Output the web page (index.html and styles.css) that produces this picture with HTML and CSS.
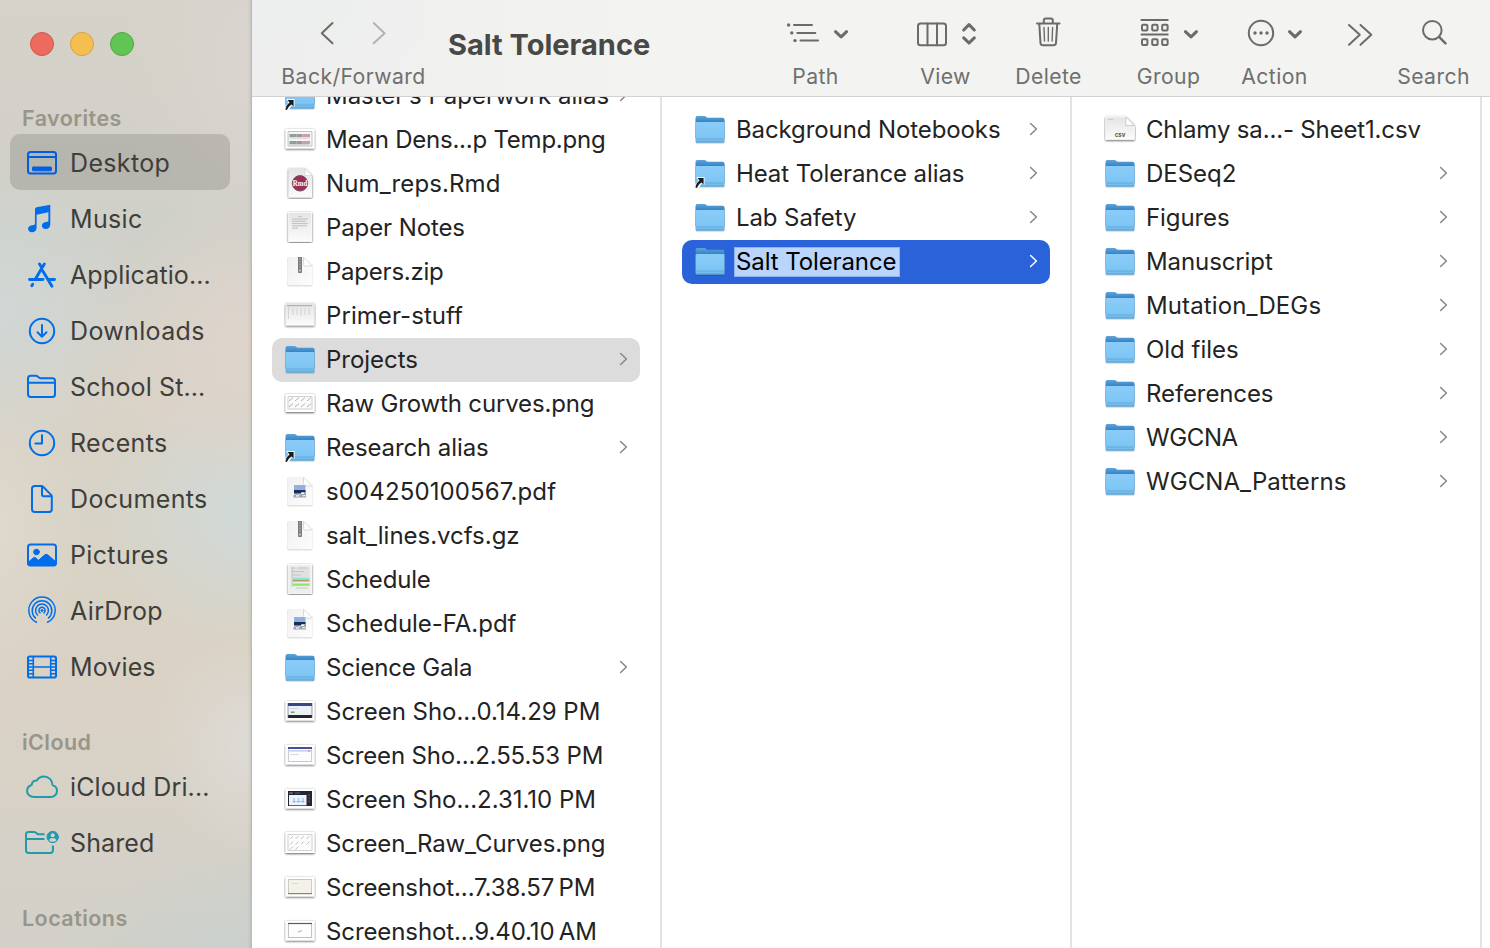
FILE: index.html
```html
<!DOCTYPE html>
<html lang="en">
<head>
<meta charset="utf-8">
<title>Salt Tolerance</title>
<link rel="stylesheet" href="styles.css">
</head>
<body>
<svg class="defs" width="0" height="0" aria-hidden="true">
  <defs>
    <linearGradient id="g-front" x1="0" y1="0" x2="0" y2="1"><stop offset="0" stop-color="#8accf8"/><stop offset=".7" stop-color="#7fc6f4"/><stop offset="1" stop-color="#6db7e8"/></linearGradient>
    <linearGradient id="g-back" x1="0" y1="2" x2="0" y2="10" gradientUnits="userSpaceOnUse"><stop offset="0" stop-color="#5ba5da"/><stop offset="1" stop-color="#2f76be"/></linearGradient>
    <linearGradient id="g-paper" x1="0" y1="0" x2="1" y2="1"><stop offset="0" stop-color="#f0f0f0"/><stop offset="1" stop-color="#fdfdfd"/></linearGradient>
    <linearGradient id="g-grey" x1="0" y1="0" x2="0" y2="1"><stop offset="0" stop-color="#e4e4e4"/><stop offset="1" stop-color="#fbfbfb"/></linearGradient>
    <filter id="shade" x="-20%" y="-20%" width="140%" height="150%"><feDropShadow dx="0" dy=".8" stdDeviation="1" flood-color="#000" flood-opacity=".7"/></filter>
    <filter id="soft" x="-20%" y="-20%" width="140%" height="150%"><feDropShadow dx="0" dy=".6" stdDeviation=".6" flood-color="#000" flood-opacity=".4"/></filter>
  </defs>
  <symbol id="folder" viewBox="0 0 32 32">
    <g filter="url(#soft)">
      <path d="M1.600 4q0-1.900 1.800-1.900h6.800q1 0 1.800.7l1.400 1h15.200q1.900 0 1.900 1.900V24H1.600z" fill="url(#g-back)"/>
      <path d="M1.600 9.300q0-1.200 1.200-1.200h26.500q1.200 0 1.200 1.200v18q0 1.200-1.200 1.200H2.800q-1.200 0-1.200-1.200z" fill="url(#g-front)"/>
    </g>
    <path d="M2 25h28.200" stroke="#5da9da" stroke-width=".8"/>
    <path d="M2 28h28.200" stroke="#569ccb" stroke-width=".8"/>
  </symbol>
  <symbol id="alias" viewBox="0 0 32 32">
    <use href="#folder"/>
    <path d="M2.500 18.900h8v8l-2.300-1.800-4 5.700-3.700.2.300-3.500 3.800-5z" fill="#fff"/>
    <path d="M3.600 20h6v6.300l-2-1.900c-2.200 1.300-3.600 3-4.600 5.600l-1.600-.6c.4-2.900 1.900-5.200 4.200-7z" fill="#1a1a1a"/>
  </symbol>
  <symbol id="doc" viewBox="0 0 32 32">
    <g filter="url(#soft)"><path d="M3.300 3q0-1 1-1h15.200L28.500 11v18q0 1.300-1.300 1.300H4.600q-1.300 0-1.300-1.300z" fill="url(#g-paper)"/></g>
    <path d="M19.500 2v7.500q0 1.500 1.500 1.500h7.500z" fill="#fdfdfd" stroke="#cfcfcf" stroke-width=".7"/>
  </symbol>
  <symbol id="note" viewBox="0 0 32 32">
    <g filter="url(#shade)"><path d="M4.700 1.500h22.800v29H4.700z" fill="url(#g-grey)" stroke="#fff" stroke-width=".8"/></g>
    <path d="M14.500 5.500h3M8 8h16M8 10.300h14M8 12.600h16M8 14.900h15M8 17.200h6" stroke="#b2b2b2" stroke-width=".8"/>
  </symbol>
  <symbol id="zip" viewBox="0 0 32 32">
    <use href="#doc"/>
    <path d="M14 2h4v15q0 1-1 1h-2q-1 0-1-1z" fill="#77797c"/>
    <path d="M16 3v11" stroke="#b4b7ba" stroke-width="1.400" stroke-dasharray="1.500 1.200"/>
    <path d="M15.200 14.500h1.600v2h-1.600z" fill="#d4d6d8"/>
  </symbol>
  <symbol id="pdf" viewBox="0 0 32 32">
    <use href="#doc"/>
    <path d="M10 10h11.500v8.500H10z" fill="#92b0e4"/>
    <path d="M10 15h11.500v3.500H10z" fill="#1d2c52"/>
    <path d="M9.500 20l4-1.500 2 1.500 3-3h3.500V22.500H9.500z" fill="#9aa6b6"/>
    <path d="M17 17.500h3v1.500h-3zM12 20.200h3v1.200h-3zM18.500 20.200h3v1h-3z" fill="#fff"/>
  </symbol>
  <symbol id="sched" viewBox="0 0 32 32">
    <g filter="url(#shade)"><path d="M4.700 1.500h22.800v29H4.700z" fill="#eceeed" stroke="#fff" stroke-width=".8"/></g>
    <path d="M7.500 4h18v11h-18z" fill="#e0e2e1"/>
    <path d="M8 5h3M14 5h9M8 8.500h12M8 12h9M8 4v20M12 25h12" stroke="#bcbfbd" stroke-width=".8"/>
    <path d="M8.500 14.700h17v2h-17z" fill="#94e3d6"/><path d="M8.500 16.700h17v1.800h-17z" fill="#b39b72"/>
    <path d="M8.500 20.500h17v2.300h-17z" fill="#8cea5a"/>
  </symbol>
  <symbol id="frame" viewBox="0 0 32 32">
    <g filter="url(#shade)"><path d="M1.500 6h29v19.500h-29z" fill="#fff"/></g>
  </symbol>
  <symbol id="density" viewBox="0 0 32 32">
    <use href="#frame"/>
    <path d="M4 8.500h24v14.500H4z" fill="#f4f4f4" stroke="#bdbdbd" stroke-width=".9"/>
    <path d="M5.500 11h7v3h-7zM5.500 18h7v3h-7z" fill="#8d9f99"/><path d="M12.500 11h6v3h-6zM12.500 18h6v3h-6z" fill="#a393a0"/><path d="M18.500 11h7.500v3h-7.500zM18.500 18h7.500v3h-7.500z" fill="#c4a2a6"/>
    <path d="M5.500 15h20M5.500 21.800h20" stroke="#b5b5b5" stroke-width=".7"/>
  </symbol>
  <symbol id="sheet" viewBox="0 0 32 32">
    <g filter="url(#shade)"><path d="M1.500 4.500h29v22h-29z" fill="url(#g-grey)"/></g>
    <path d="M3 6.700h25" stroke="#a4a4a4" stroke-width="1"/>
    <path d="M4.500 8v12M9 9v7M13 9v7M17 9v8M21 9v7M25 9v7" stroke="#cacaca" stroke-width=".8"/>
  </symbol>
  <symbol id="curves" viewBox="0 0 32 32">
    <g filter="url(#shade)"><path d="M1.500 7h29v18h-29z" fill="#fff"/></g>
    <path d="M4 9.500h24v12.500H4z" fill="#fbfbfb" stroke="#c4c4c4" stroke-width=".8"/>
    <path d="M5 14l4-3.500M11 14l4-3.500M17 14l4-3.500M23 14l4-3.500M5 20l4-3.500M11 20l4-3.500M17 20l4-3.500M23 20l4-3.500" stroke="#8f8f8f" stroke-width=".7"/>
  </symbol>
  <symbol id="shot1" viewBox="0 0 32 32">
    <use href="#frame"/>
    <path d="M4 8h24v15H4z" fill="#edf1f5"/><path d="M4 8h24v3H4z" fill="#34488a"/><path d="M4 20h24v3H4z" fill="#25272b"/><path d="M7 16.500h3.500v1.500H7z" fill="#5fae61"/><path d="M6 13.500h8" stroke="#d5d9de"/><path d="M4 8v15M28 8v15" stroke="#55607a" stroke-width=".6"/>
  </symbol>
  <symbol id="shot2" viewBox="0 0 32 32">
    <use href="#frame"/>
    <path d="M4.400 8.500h23.200v14H4.400z" fill="#fcfcff" stroke="#b7bac4" stroke-width=".8"/><path d="M4 8h24v2H4z" fill="#3c549c"/><path d="M4 11h24v1.700H4z" fill="#d3cdec"/><path d="M24 11h2v1.700h-2z" fill="#e8a080"/><path d="M6 15.500h9" stroke="#ccc" stroke-width=".7"/>
  </symbol>
  <symbol id="shot3" viewBox="0 0 32 32">
    <use href="#frame"/>
    <path d="M4 8h24v15H4z" fill="#242730"/><path d="M5 12h17.500v10.300H5z" fill="#eef4fb"/><path d="M9 15h2v5H9zM13.500 15h2v5h-2zM18 15h2v5h-2z" fill="#b5d5f4"/><path d="M8.500 18.500h12" stroke="#8fbbe8" stroke-width=".8"/><path d="M5 10h4" stroke="#8e8f96"/><path d="M11 10h5" stroke="#4d62b8"/><path d="M25 11v9" stroke="#555a66" stroke-width="1.200" stroke-dasharray="2 1.200"/>
  </symbol>
  <symbol id="rawshot" viewBox="0 0 32 32">
    <g filter="url(#shade)"><path d="M1.500 5h29v21h-29z" fill="#fff"/></g>
    <path d="M4 7.500h24v16H4z" fill="#fcfcfc" stroke="#ccc" stroke-width=".9"/>
    <path d="M6 12l3-3M11.500 12l3-3M17 12l3-3M22.500 12l3-3M6 17.500l3-3M11.500 17.500l3-3M17 17.500l3-3M22.500 17.500l3-3M6 22.500l3-3M11.500 22.500l3-3" stroke="#b2b2b2" stroke-width=".8"/>
  </symbol>
  <symbol id="shot4" viewBox="0 0 32 32">
    <use href="#frame"/>
    <path d="M4.400 8.500h23.200v14H4.400z" fill="#f4f1e9" stroke="#bdbab3" stroke-width=".8"/><path d="M8 12.500h6" stroke="#dcd8cf"/><path d="M4 22.700h24" stroke="#6d6a63" stroke-width=".9"/>
  </symbol>
  <symbol id="shot5" viewBox="0 0 32 32">
    <use href="#frame"/>
    <path d="M4.400 8.500h23.200v14H4.400z" fill="#fdfdfd" stroke="#a9adab" stroke-width=".8"/><path d="M4 8.500h24" stroke="#386c5e" stroke-width="1.200"/><path d="M14 17l4-1.300" stroke="#a3b3ae" stroke-width="1"/>
  </symbol>
  <symbol id="chev" viewBox="0 0 10 14"><path d="M2.600 1.500L8.400 7l-5.800 5.500" fill="none" stroke="currentColor" stroke-width="1.500" stroke-linecap="round" stroke-linejoin="round"/></symbol>
</svg>

<div class="window">
  <aside class="sidebar">
    <div class="lights"><i class="light close"></i><i class="light min"></i><i class="light max"></i></div>
    <h2 class="group">Favorites</h2>
    <div class="place current"><svg class="glyph" viewBox="0 0 36 36"><rect x="4" y="7" width="28" height="21.500" rx="2.500"/><path d="M4 12h28"/><rect class="solid" x="8.500" y="22" width="19" height="3.800" rx=".8"/></svg><span>Desktop</span></div>
    <div class="place"><svg class="glyph" viewBox="0 0 36 36"><path class="solid" d="M11 8.200q0-1.500 1.500-1.900L25 3.900q1.300-.2 1.300 1V23.200c0 3-1.800 4.800-4.700 4.800-2.300 0-3.700-1.400-3.700-3.200 0-2 1.500-3.300 3.900-3.700l1.600-.3q1-.2 1-1.200V11.200l-11.800 2.500V26.400c0 3-1.900 4.800-4.700 4.800-2.300 0-3.800-1.400-3.800-3.300 0-2 1.500-3.200 3.800-3.600l2-.4q1-.2 1-1.200z" stroke="none"/></svg><span>Music</span></div>
    <div class="place"><svg class="glyph" viewBox="0 0 36 36"><g stroke-width="2.900"><path d="M15.500 7l2 3.300M20.300 7L12 21M5.500 22.500h13.500M25 22.500h5.500M18.800 14L28 29.200M8.700 27.200l-.9 1.600"/></g></svg><span class="cut">Applicatio...</span></div>
    <div class="place"><svg class="glyph" viewBox="0 0 36 36"><circle cx="18" cy="18" r="12.200"/><path d="M18 12v11.500M13.500 19.200L18 23.700l4.500-4.500"/></svg><span>Downloads</span></div>
    <div class="place"><svg class="glyph" viewBox="0 0 36 36"><path d="M4 9.500q0-2.700 2.700-2.700h5q1.200 0 2 .7l1.200 1q.9.700 2 .7h11.500q2.600 0 2.600 2.600v13.500q0 2.700-2.600 2.700H6.700Q4 28 4 25.300zM4 13.800h27"/></svg><span class="cut">School St...</span></div>
    <div class="place"><svg class="glyph" viewBox="0 0 36 36"><circle cx="18" cy="18" r="12.200"/><path d="M18 10.300v8.300h-6.700"/></svg><span>Recents</span></div>
    <div class="place"><svg class="glyph" viewBox="0 0 36 36"><path d="M8 7.700Q8 5 10.700 5h6.700q1 0 1.700.7l8 8.200q.7.700.7 1.700v12.700q0 2.600-2.600 2.600H10.700Q8 30.900 8 28.300zM18 5.200v8.400q0 1.600 1.600 1.600h8"/></svg><span>Documents</span></div>
    <div class="place"><svg class="glyph" viewBox="0 0 36 36"><rect x="4" y="7.500" width="28" height="21" rx="2.500"/><circle class="solid" cx="12.500" cy="15" r="2.800"/><path class="solid" d="M4 25.500l5.500-4.800q1-.7 2 .1l3 2.500 6-5.300q1.800-1.300 3.500 0l8 7v2q0 1.500-1.700 1.500H5.700Q4 28.500 4 27z"/></svg><span>Pictures</span></div>
    <div class="place"><svg class="glyph thin" viewBox="0 0 36 36"><path d="M12.500 29.300A13.200 13.200 0 1 1 23.500 29.300M11.400 24.900A9.800 9.800 0 1 1 24.600 24.900M13.500 22A6.400 6.400 0 1 1 22.500 22M16.100 19.800A3.100 3.100 0 1 1 19.900 19.800"/><circle class="solid" cx="18" cy="17.500" r="1"/></svg><span>AirDrop</span></div>
    <div class="place"><svg class="glyph" viewBox="0 0 36 36"><rect x="4" y="7.500" width="28" height="21" rx="1.800"/><path d="M9.300 8v20M26.700 8v20M9.300 18h17.400M4.500 11.500h4.500M4.500 14.800h4.500M4.500 18h4.500M4.500 21.300h4.500M4.500 24.700h4.500M27 11.500h4.500M27 14.800h4.500M27 18h4.500M27 21.300h4.500M27 24.700h4.500" stroke-width="1.600"/></svg><span class="cut">Movies</span></div>
    <h2 class="group">iCloud</h2>
    <div class="place"><svg class="glyph teal" viewBox="0 0 36 36"><path d="M10 28c-4 0-6.900-2.600-6.900-6.100 0-2.900 1.900-5.200 4.600-5.900.2-3 2.300-4.700 5.100-4.500 1.400-2.600 3.900-4.100 7-4.100 4.900 0 8.600 3.700 8.700 8.700 2.700.8 4.500 3 4.500 5.700 0 3.500-2.700 6.200-6.300 6.200z"/></svg><span class="cut">iCloud Dri...</span></div>
    <div class="place"><svg class="glyph teal" viewBox="0 0 36 36"><path d="M20.500 9.300H15q-1.100 0-2-.7l-1.200-1q-.8-.7-2-.7H4.700Q2 6.900 2 9.600v15.600q0 2.700 2.700 2.700h21.600q2.600 0 2.600-2.700V20.500M2 14h18.500" stroke-linecap="butt"/><circle class="solid" cx="28.700" cy="12" r="5.700"/><circle cx="28.700" cy="10.200" r="2" class="cutout"/><path d="M24.900 15.300q1-2.200 3.800-2.200t3.800 2.200q-1.500 1.500-3.800 1.500t-3.800-1.500z" class="cutout"/></svg><span class="cut">Shared</span></div>
    <h2 class="group">Locations</h2>
  </aside>

  <main class="main">
    <header class="toolbar">
      <div class="tool t-nav"><svg viewBox="272 0 162 60"><path d="M332.500 23l-10.700 10.200 10.700 10"/><path class="dim" d="M373.700 23l10.900 10.200-10.900 10"/></svg><span>Back/Forward</span></div>
      <h1 class="title">Salt Tolerance</h1>
      <div class="tool t-path"><svg viewBox="760 0 110 60"><path d="M794 25h18M797.300 32.900h18M800.500 40.600h17.500"/><g class="dots"><circle cx="788.600" cy="25" r="1.700"/><circle cx="791.800" cy="32.900" r="1.700"/><circle cx="795" cy="40.600" r="1.700"/></g><path class="bold" d="M835.500 31.700l5.600 5.200 5.500-5.200"/></svg><span>Path</span></div>
      <div class="tool t-view"><svg viewBox="880 0 130 60"><rect x="918" y="23.500" width="28" height="21.700" rx="2.500"/><path d="M927.500 23.500v21.700M937 23.500v21.700"/><path class="bold" d="M963.700 30l5.300-5.300 5.300 5.300M963.700 37.800L969 43l5.300-5.200"/></svg><span>View</span></div>
      <div class="tool t-delete"><svg viewBox="1013 0 70 60"><path d="M1037 23.500h22.500M1043.800 23v-2.500q0-2 2-2h5q2 0 2 2V23M1039.300 24l1.200 19q.2 2.300 2.500 2.300h10.600q2.200 0 2.400-2.300l1.200-19"/><path d="M1044 27.500l.5 13.500M1048.300 27.500V41M1052.600 27.500l-.5 13.500" stroke-width="1.400"/></svg><span>Delete</span></div>
      <div class="tool t-group"><svg viewBox="1113 0 110 60"><path d="M1141.500 20h26.200M1141.500 34.500h26.200"/><g><rect x="1142" y="24.700" width="5.400" height="5.800" rx="1"/><rect x="1152.200" y="24.700" width="5.400" height="5.800" rx="1"/><rect x="1162.200" y="24.700" width="5.400" height="5.800" rx="1"/><rect x="1142" y="39.200" width="5.400" height="5.800" rx="1"/><rect x="1152.200" y="39.200" width="5.400" height="5.800" rx="1"/><rect x="1162.200" y="39.200" width="5.400" height="5.800" rx="1"/></g><path class="bold" d="M1185.400 31.700l5.600 5.200 5.500-5.200"/></svg><span>Group</span></div>
      <div class="tool t-action"><svg viewBox="1234 0 80 60"><circle cx="1261" cy="33" r="12.200"/><g class="dots"><circle cx="1255" cy="33" r="1.700"/><circle cx="1261" cy="33" r="1.700"/><circle cx="1267" cy="33" r="1.700"/></g><path class="bold" d="M1289.500 31.700l5.500 5.200 5.500-5.200"/></svg><span>Action</span></div>
      <div class="tool t-more"><svg viewBox="1339 0 40 60"><path d="M1349 25l10.800 9.800-10.800 10M1360.500 25l10.800 9.800-10.800 10"/></svg></div>
      <div class="tool t-search"><svg viewBox="1393 0 80 60"><circle cx="1432.300" cy="30.200" r="9.300"/><path d="M1439.300 37.200l6.200 6.200" stroke-width="2.500"/></svg><span>Search</span></div>
    </header>

    <div class="columns">
      <section class="column scrolled">
        <div class="row"><svg class="icon"><use href="#alias"/></svg><span class="name ls0">Master’s Paperwork alias</span><svg class="chev"><use href="#chev"/></svg></div>
        <div class="row"><svg class="icon thumb"><use href="#density"/></svg><span class="name narrower">Mean Dens...p Temp.png</span></div>
        <div class="row"><svg class="icon thumb" viewBox="0 0 32 32"><g filter="url(#shade)"><path d="M4.500 1.500h16.500l7 7v22h-23.500z" fill="url(#g-grey)"/></g><path d="M21 1.500v7h7z" fill="#fff" stroke="#ccc" stroke-width=".6"/><circle cx="16" cy="16.300" r="7.700" fill="#a02b5a" stroke="#6f5560" stroke-width="1"/><text x="16" y="19.300" class="badge-rmd" textLength="14.500" lengthAdjust="spacingAndGlyphs">Rmd</text></svg><span class="name wider">Num_reps.Rmd</span></div>
        <div class="row"><svg class="icon thumb"><use href="#note"/></svg><span class="name">Paper Notes</span></div>
        <div class="row"><svg class="icon thumb"><use href="#zip"/></svg><span class="name narrower">Papers.zip</span></div>
        <div class="row"><svg class="icon thumb"><use href="#sheet"/></svg><span class="name wide">Primer-stuff</span></div>
        <div class="row open"><svg class="icon"><use href="#folder"/></svg><span class="name ls0">Projects</span><svg class="chev"><use href="#chev"/></svg></div>
        <div class="row"><svg class="icon thumb"><use href="#curves"/></svg><span class="name narrow">Raw Growth curves.png</span></div>
        <div class="row"><svg class="icon"><use href="#alias"/></svg><span class="name">Research alias</span><svg class="chev"><use href="#chev"/></svg></div>
        <div class="row"><svg class="icon thumb"><use href="#pdf"/></svg><span class="name wider">s004250100567.pdf</span></div>
        <div class="row"><svg class="icon thumb"><use href="#zip"/></svg><span class="name ls0">salt_lines.vcfs.gz</span></div>
        <div class="row"><svg class="icon thumb"><use href="#sched"/></svg><span class="name narrow">Schedule</span></div>
        <div class="row"><svg class="icon thumb"><use href="#pdf"/></svg><span class="name ls0">Schedule-FA.pdf</span></div>
        <div class="row"><svg class="icon"><use href="#folder"/></svg><span class="name narrow">Science Gala</span><svg class="chev"><use href="#chev"/></svg></div>
        <div class="row"><svg class="icon thumb"><use href="#shot1"/></svg><span class="name ls0">Screen Sho...0.14.29 PM</span></div>
        <div class="row"><svg class="icon thumb"><use href="#shot2"/></svg><span class="name narrow">Screen Sho...2.55.53 PM</span></div>
        <div class="row"><svg class="icon thumb"><use href="#shot3"/></svg><span class="name ls0">Screen Sho...2.31.10 PM</span></div>
        <div class="row"><svg class="icon thumb"><use href="#rawshot"/></svg><span class="name">Screen_Raw_Curves.png</span></div>
        <div class="row"><svg class="icon thumb"><use href="#shot4"/></svg><span class="name">Screenshot...7.38.57&#8239;PM</span></div>
        <div class="row"><svg class="icon thumb"><use href="#shot5"/></svg><span class="name">Screenshot...9.40.10&#8239;AM</span></div>
      </section>
      <section class="column">
        <div class="row"><svg class="icon"><use href="#folder"/></svg><span class="name">Background Notebooks</span><svg class="chev"><use href="#chev"/></svg></div>
        <div class="row"><svg class="icon"><use href="#alias"/></svg><span class="name">Heat Tolerance alias</span><svg class="chev"><use href="#chev"/></svg></div>
        <div class="row"><svg class="icon"><use href="#folder"/></svg><span class="name">Lab Safety</span><svg class="chev"><use href="#chev"/></svg></div>
        <div class="row selected"><svg class="icon"><use href="#folder"/></svg><span class="name"><span class="editing">Salt Tolerance</span></span><svg class="chev"><use href="#chev"/></svg></div>
      </section>
      <section class="column">
        <div class="row"><svg class="icon thumb" viewBox="0 0 32 32"><g filter="url(#shade)"><path d="M1.700 4h20l8.800 8.500V26.500H1.700z" fill="url(#g-grey)" stroke="#fff" stroke-width=".6"/></g><path d="M21.700 4v8.500h8.800z" fill="#fdfdfd" stroke="#bdbdbd" stroke-width=".7"/><path d="M4 6.500h5" stroke="#bbb" stroke-width=".7"/><text x="16" y="23.800" class="badge-csv">csv</text></svg><span class="name narrow">Chlamy sa...- Sheet1.csv</span></div>
        <div class="row"><svg class="icon"><use href="#folder"/></svg><span class="name ls0">DESeq2</span><svg class="chev"><use href="#chev"/></svg></div>
        <div class="row"><svg class="icon"><use href="#folder"/></svg><span class="name">Figures</span><svg class="chev"><use href="#chev"/></svg></div>
        <div class="row"><svg class="icon"><use href="#folder"/></svg><span class="name">Manuscript</span><svg class="chev"><use href="#chev"/></svg></div>
        <div class="row"><svg class="icon"><use href="#folder"/></svg><span class="name wider">Mutation_DEGs</span><svg class="chev"><use href="#chev"/></svg></div>
        <div class="row"><svg class="icon"><use href="#folder"/></svg><span class="name ls0">Old files</span><svg class="chev"><use href="#chev"/></svg></div>
        <div class="row"><svg class="icon"><use href="#folder"/></svg><span class="name">References</span><svg class="chev"><use href="#chev"/></svg></div>
        <div class="row"><svg class="icon"><use href="#folder"/></svg><span class="name narrowest">WGCNA</span><svg class="chev"><use href="#chev"/></svg></div>
        <div class="row"><svg class="icon"><use href="#folder"/></svg><span class="name wide">WGCNA_Patterns</span><svg class="chev"><use href="#chev"/></svg></div>
      </section>
    </div>
  </main>
</div>
</body>
</html>
```

FILE: styles.css
```css
* { box-sizing: border-box; margin: 0; padding: 0; }

body {
  width: 1490px;
  height: 948px;
  overflow: hidden;
  background: #fff;
  color: #232323;
  font-family: Inter, "Liberation Sans", sans-serif;
  font-size: 24px;
}

.defs { position: absolute; }
.badge-rmd { font: bold 8.5px "Liberation Serif", serif; fill: #fff; text-anchor: middle; }
.badge-csv { font: bold 6px Inter, sans-serif; fill: #555; text-anchor: middle; }

.window { display: flex; height: 948px; }

/* Sidebar */
.sidebar {
  flex: 0 0 252px;
  overflow: hidden;
  box-shadow: inset -1px 0 0 #bdbab4, inset -4px 0 3px -2px rgba(0, 0, 0, .1);
  background:
    radial-gradient(circle 150px at 0 310px, #d0d7d5, transparent),
    radial-gradient(ellipse 150px 150px at 252px 340px, #dfd5cd, transparent),
    radial-gradient(ellipse 150px 130px at 252px 515px, #d1dad9, transparent),
    radial-gradient(ellipse 100px 110px at 252px 745px, #dedbd6, transparent),
    radial-gradient(ellipse 190px 110px at 252px 948px, #cbd0cd, transparent),
    radial-gradient(ellipse 80px 150px at 0 530px, #dfd8cd, transparent),
    radial-gradient(ellipse 130px 200px at 252px 60px, #dad5cf, transparent),
    linear-gradient(#d4d2c9 0, #d2d0c8 150px, #cfd0c9 240px, #d9d2c6 400px, #d7d3c6 520px, #dad2c4 680px, #d6d1c8 840px, #d2d0c9 948px);
}

.lights { display: flex; gap: 16px; height: 70px; padding: 32px 0 0 30px; }
.light { width: 24px; height: 24px; border-radius: 50%; border: 1px solid; }
.close { background: #ed6a5e; border-color: #d1574b; }
.min { background: #f5bf4f; border-color: #d6a243; }
.max { background: #61c554; border-color: #4fa73e; }

.group {
  height: 64px;
  padding: 32px 0 0 22px;
  line-height: 33px;
  font-size: 21.5px;
  font-weight: 600;
  letter-spacing: .45px;
  color: #98958b;
}

.place {
  display: flex;
  align-items: center;
  gap: 10px;
  height: 56px;
  width: 220px;
  margin-left: 10px;
  padding: 2px 0 0 14px;
  border-radius: 10px;
  color: #3f3e3b;
  font-size: 25px;
  letter-spacing: .35px;
  white-space: nowrap;
}
.place .cut { letter-spacing: .12px; }
.current { background: rgba(0, 0, 0, .13); }
.current .glyph { color: #005fe0; }

.glyph {
  width: 36px;
  height: 36px;
  color: #006eea;
  fill: none;
  stroke: currentColor;
  stroke-width: 2;
  stroke-linecap: round;
  stroke-linejoin: round;
}
.glyph .solid { fill: currentColor; stroke-width: 1; }
.glyph .cutout { fill: #d8d3c8; stroke: none; }
.thin { stroke-width: 1.5; }
.teal { color: #229aab; }

/* Toolbar */
.main { flex: 1; min-width: 0; display: flex; flex-direction: column; }
.toolbar {
  display: flex;
  flex: 0 0 97px;
  z-index: 1;
  border-bottom: 1px solid #d2d2d2;
  background: radial-gradient(ellipse 200px 100px at 0 0, #ecefee, transparent), linear-gradient(90deg, #eeeeed, #f3f3f1 420px);
}
.tool { display: flex; flex-direction: column; align-items: center; flex: none; color: #6b6b6a; }
.tool svg {
  width: 100%;
  height: 60px;
  fill: none;
  stroke: currentColor;
  stroke-width: 2;
  stroke-linecap: round;
  stroke-linejoin: round;
}
.tool span { height: 34px; padding-left: 1px; line-height: 33px; font-size: 21.2px; letter-spacing: .4px; color: #6f6f6e; }
.tool .bold { stroke-width: 3.1; }
.tool .dim { color: #b3b3b2; stroke: #b3b3b2; }
.tool .dots { fill: currentColor; stroke: none; }
.t-nav { width: 162px; margin-left: 20px; }
.title { width: 312px; margin-left: 14px; padding-top: 25px; line-height: 40px; font-size: 29px; font-weight: 650; color: #484847; white-space: nowrap; }
.t-path { width: 110px; }
.t-view { width: 130px; margin-left: 10px; }
.t-delete { width: 70px; margin-left: 3px; }
.t-group { width: 110px; margin-left: 30px; }
.t-action { width: 80px; margin-left: 11px; }
.t-more { width: 40px; margin-left: 25px; }
.t-search { width: 80px; margin-left: 14px; }

/* Columns */
.columns { flex: 1; min-height: 0; display: flex; overflow: hidden; }
.column { flex: 0 0 410px; padding: 11px 20px 0; border-right: 2px solid #e3e3e3; }
.scrolled { padding-top: 0; }
.scrolled .row:first-child { margin-top: -23px; }
.row { display: flex; align-items: center; height: 44px; padding: 0 12px; border-radius: 10px; }
.icon { flex: none; width: 32px; height: 32px; margin-right: 10px; }
.thumb { margin-bottom: 2px; }
.name { flex: 1; line-height: 30px; letter-spacing: -.1px; white-space: nowrap; }
.ls0 { letter-spacing: -.02px; }
.wide { letter-spacing: .07px; }
.wider { letter-spacing: .12px; }
.narrow { letter-spacing: -.16px; }
.narrower { letter-spacing: -.23px; }
.narrowest { letter-spacing: -.4px; }
.chev { width: 10px; height: 14px; margin-top: -2px; color: #868686; }
.open { background: #dcdcdc; }
.selected { background: #2962d9; }
.selected .chev { color: #fff; }
.editing { display: inline-block; margin-left: -2px; padding: 0 4px 0 2px; background: #b9d5fb; outline: 1px solid #8fb6f3; outline-offset: -1px; color: #000; }
```
